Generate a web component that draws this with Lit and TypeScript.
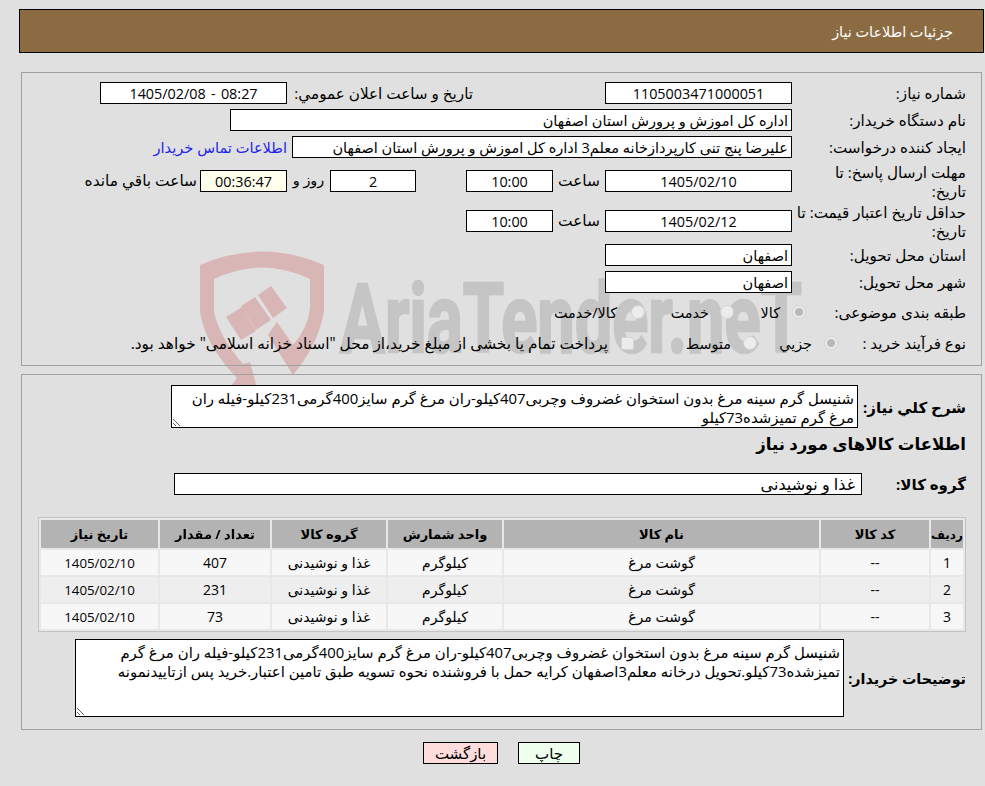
import { LitElement, html, css } from "lit";
import { customElement } from "lit/decorators.js";

const DESC =
  "شنیسل گرم سینه مرغ بدون استخوان غضروف وچربی407کیلو-ران مرغ گرم سایز400گرمی231کیلو-فیله ران مرغ گرم تمیزشده73کیلو";
const NOTES = DESC + ".تحویل درخانه معلم3اصفهان کرایه حمل با فروشنده نحوه تسویه طبق تامین اعتبار.خرید پس ازتاییدنمونه";

const ROWS = [
  ["1", "--", "گوشت مرغ", "کیلوگرم", "غذا و نوشیدنی", "407", "1405/02/10"],
  ["2", "--", "گوشت مرغ", "کیلوگرم", "غذا و نوشیدنی", "231", "1405/02/10"],
  ["3", "--", "گوشت مرغ", "کیلوگرم", "غذا و نوشیدنی", "73", "1405/02/10"],
];
const HEAD = ["ردیف", "کد کالا", "نام کالا", "واحد شمارش", "گروه کالا", "تعداد / مقدار", "تاریخ نیاز"];
const WIDTHS = [32, 108, 315, 114, 114, 110, 117];

@customElement("app-root")
export class AppRoot extends LitElement {
  static styles = css`
    :host {
      display: block;
      position: relative;
      min-height: 786px;
      background: #e0e0e0;
      overflow: hidden;
      font-family: "Open Sans", "DejaVu Sans", sans-serif;
      font-size: 14.4px;
      color: #000;
    }
    .wm { position: absolute; left: 0; top: 0; width: 985px; height: 786px; pointer-events: none; }
    .wm-text { font-family: "Roboto", sans-serif; font-weight: 700; font-size: 96px; fill: #c5c5c5; stroke: #c5c5c5; stroke-width: 2.5px; }
    .page { position: relative; direction: rtl; padding: 9px 1px 0 19px; box-sizing: border-box; }
    .header {
      height: 44px; box-sizing: border-box; border: 1px solid #000; background: #8b6c42; color: #fff;
      display: flex; align-items: center; padding: 1px 30px 0 0; font-size: 14.4px;
    }
    .panel { margin: 0 2px; border: 1px solid #a0a0a0; box-sizing: border-box; padding: 9px 15px 8px; }
    .first { margin-top: 19px; }
    .second { margin-top: 8px; padding: 10px 15px 12px; }
    .row { display: flex; align-items: center; height: 22px; margin-bottom: 5px; white-space: nowrap; }
    .tall { height: 38px; align-items: flex-start; margin-bottom: 2px; }
    .tall.last { margin-bottom: 3px; }
    .tall .label { white-space: normal; line-height: 19px; }
    .tall .field, .tall .tx { margin-top: 7px; }
    .opt { height: 28px; margin: 0; }
    .label { width: 174px; flex: none; font-size: 15.2px; }
    .f186 { width: 187px; }
    .field {
      flex: none; height: 22px; box-sizing: border-box; border: 1px solid #000; background: #fff;
      display: flex; align-items: center; justify-content: center; white-space: nowrap; overflow: hidden;
    }
    .start { justify-content: flex-start; padding-right: 3px; font-size: 14.5px; }
    .ltr { direction: ltr; word-spacing: 1.5px; }
    .clock { background: #ffffee; }
    .tx { flex: none; }
    .wide { font-size: 15.4px; }
    .link { color: #2222ee; margin-right: 5px; text-decoration: none; font-size: 14.6px; }
    .radio {
      flex: none; width: 14px; height: 14px; border-radius: 50%; border: 1px solid #d4d4d4; background: #ececec;
      display: flex; align-items: center; justify-content: center; box-sizing: border-box;
    }
    .radio.on::after { content: ""; width: 8px; height: 8px; border-radius: 50%; background: #b8b8b8; }
    .check { flex: none; width: 13px; height: 13px; border: 1px solid #d4d4d4; background: #ececec; border-radius: 2px; box-sizing: border-box; }
    .b { font-weight: 700; font-size: 15px; }
    .drow { display: flex; align-items: center; white-space: nowrap; }
    .drow .b { flex: none; }
    textarea {
      display: block; box-sizing: border-box; margin: 0; border: 1px solid #000; border-radius: 0; background: #fff;
      color: #000; font-family: inherit; font-size: 14.9px; line-height: 18.5px; padding: 3px 3px 2px 2px; direction: rtl; outline: none;
    }
    .t1 { width: 687px; height: 43px; }
    .t2 { width: 769px; height: 78px; }
    .heading { height: 20px; margin-top: 6px; line-height: 20px; white-space: nowrap; }
    .b.heading { font-size: 16.6px; }
    .group { margin-top: 19px; height: 22px; }
    .group .field { width: 688px; justify-content: flex-start; padding-right: 6px; font-size: 16px; }
    .b.notes-label { width: 122px; font-size: 14.3px; }
    table {
      margin-top: 22px; width: 928px; table-layout: fixed; border: 1px solid #c4c4c4; border-collapse: separate;
      border-spacing: 2px; background: #e8e8e8; box-sizing: border-box; font-size: 14px;
    }
    th { background: #b3b3b3; height: 28px; padding: 0; font-size: 13px; font-weight: 700; overflow: hidden; }
    th:first-child { font-size: 12px; }
    td { height: 25px; padding: 0; text-align: center; background: #f7f7f7; }
    td:last-child { font-size: 13.3px; }
    tr.alt td { background: #eeeeee; }
    .notes { margin-top: 7px; }
    .actions { display: flex; justify-content: center; gap: 20px; margin: 12px 2px 0; }
    .btn {
      height: 22px; box-sizing: border-box; border: 1px solid #000; display: flex; align-items: center; justify-content: center;
      font-size: 15px;
    }
    .print { width: 62px; background: #eeffee; }
    .back { width: 75px; background: #ffdddd; }
  `;

  private date(v: string) {
    return html`<span class="field f186">${v}</span>`;
  }

  private hour() {
    return html`<span class="tx wide" style="width:52px;text-align:center">ساعت</span><span class="field" style="width:87px">10:00</span>`;
  }

  render() {
    return html`
      <svg class="wm" viewBox="0 0 985 786" aria-hidden="true">
        <g fill="#d9b6b6">
          <path d="M200 265 Q262 238 324 265 L324 312 Q318 345 293 375 L268 335 L277 322 L293 345 Q308 328 310 308 L310 279 Q262 256 214 279 L214 312 Q220 338 243 364 L250 362 L257 388 L231 386 L237 378 Q205 345 200 312 Z" />
          <path d="M226 317 L242 307 L256 331 L241 340 Z" />
          <path d="M241 306 L255 297 L271 320 L256 330 Z" />
          <path d="M258 295 L271 286 L287 308 L273 318 Z" />
        </g>
        <text class="wm-text" x="340" y="352" textLength="462" lengthAdjust="spacingAndGlyphs">AriaTender.neT</text>
      </svg>
      <div class="page">
        <div class="header">جزئیات اطلاعات نیاز</div>

        <section class="panel first">
          <div class="row">
            <span class="label">شماره نیاز:</span>
            ${this.date("1105003471000051")}
            <span class="tx" style="margin-right:132px;width:186px;font-size:15.2px">تاریخ و ساعت اعلان عمومي:</span>
            <span class="field ltr" style="width:187px">1405/02/08 - 08:27</span>
          </div>
          <div class="row">
            <span class="label">نام دستگاه خریدار:</span>
            <span class="field start" style="width:562px">اداره کل اموزش و پرورش استان اصفهان</span>
          </div>
          <div class="row">
            <span class="label">ایجاد کننده درخواست:</span>
            <span class="field start" style="width:500px">علیرضا پنج تنی کارپردازخانه معلم3 اداره کل اموزش و پرورش استان اصفهان</span>
            <a class="link" href="#">اطلاعات تماس خریدار</a>
          </div>
          <div class="row tall">
            <span class="label">مهلت ارسال پاسخ: تا<br />تاریخ:</span>
            ${this.date("1405/02/10")}
            ${this.hour()}
            <span class="field" style="width:86px;margin-right:50px">2</span>
            <span class="tx" style="width:43px;text-align:center">روز و</span>
            <span class="field clock" style="width:87px">00:36:47</span>
            <span class="tx wide" style="margin-right:3px">ساعت باقي مانده</span>
          </div>
          <div class="row tall last">
            <span class="label">حداقل تاریخ اعتبار قیمت: تا<br />تاریخ:</span>
            ${this.date("1405/02/12")}
            ${this.hour()}
          </div>
          <div class="row">
            <span class="label">استان محل تحویل:</span>
            <span class="field f186 start">اصفهان</span>
          </div>
          <div class="row">
            <span class="label">شهر محل تحویل:</span>
            <span class="field f186 start">اصفهان</span>
          </div>
          <div class="row opt">
            <span class="label">طبقه بندی موضوعی:</span>
            <span class="radio on" style="margin-right:-14px"></span>
            <span class="tx" style="margin-right:12px;width:46px">کالا</span>
            <span class="radio"></span>
            <span class="tx" style="margin-right:11px;width:64px">خدمت</span>
            <span class="radio"></span>
            <span class="tx" style="margin-right:14px">کالا/خدمت</span>
          </div>
          <div class="row opt" style="margin-top:3px">
            <span class="label">نوع فرآیند خرید :</span>
            <span class="radio on" style="margin-right:-46px"></span>
            <span class="tx" style="margin-right:12px;width:55px">جزیي</span>
            <span class="radio"></span>
            <span class="tx" style="margin-right:12px;width:97px">متوسط</span>
            <span class="check"></span>
            <span class="tx wide" style="margin-right:13px">پرداخت تمام یا بخشی از مبلغ خرید،از محل "اسناد خزانه اسلامی" خواهد بود.</span>
          </div>
        </section>

        <section class="panel second">
          <div class="drow">
            <span class="b" style="width:108px">شرح کلي نياز:</span>
            <textarea class="t1" readonly .value=${DESC}></textarea>
          </div>
          <div class="heading b">اطلاعات کالاهای مورد نیاز</div>
          <div class="drow group">
            <span class="b" style="width:104px">گروه کالا:</span>
            <span class="field">غذا و نوشیدنی</span>
          </div>
          <table>
            <colgroup>${WIDTHS.map((w) => html`<col style="width:${w}px" />`)}</colgroup>
            <thead><tr>${HEAD.map((h) => html`<th>${h}</th>`)}</tr></thead>
            <tbody>
              ${ROWS.map((r, i) => html`<tr class=${i % 2 ? "alt" : ""}>${r.map((c) => html`<td>${c}</td>`)}</tr>`)}
            </tbody>
          </table>
          <div class="drow notes">
            <span class="b notes-label">توضیحات خریدار:</span>
            <textarea class="t2" readonly .value=${NOTES}></textarea>
          </div>
        </section>

        <div class="actions">
          <div class="btn print">چاپ</div>
          <div class="btn back">بازگشت</div>
        </div>
      </div>
    `;
  }
}
